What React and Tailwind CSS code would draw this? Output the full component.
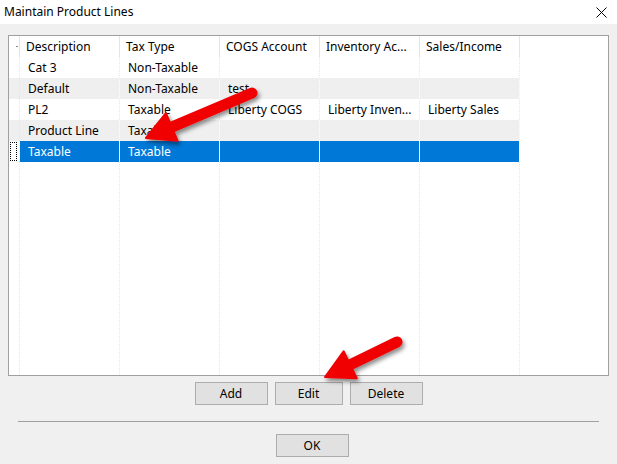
import React from "react";

const columns = ["Description", "Tax Type", "COGS Account", "Inventory Ac...", "Sales/Income"];

const productLines = [
  ["Cat 3", "Non-Taxable", "", "", ""],
  ["Default", "Non-Taxable", "test", "", ""],
  ["PL2", "Taxable", "Liberty COGS", "Liberty Inven...", "Liberty Sales"],
  ["Product Line", "Taxable", "", "", ""],
  ["Taxable", "Taxable", "", "", ""],
];

const SELECTED = 4;

// red callout arrow: shaft with round tail, triangular head
function Arrow({ from, to }) {
  const [x1, y1] = from;
  const [x2, y2] = to;
  const dx = x2 - x1;
  const dy = y2 - y1;
  const len = Math.hypot(dx, dy);
  const ux = dx / len;
  const uy = dy / len;
  const px = -uy;
  const py = ux;
  const headLen = 28;
  const headHalf = 15;
  const bx = x2 - ux * headLen;
  const by = y2 - uy * headLen;
  const head = [
    [x2, y2],
    [bx + px * headHalf, by + py * headHalf],
    [bx - px * headHalf, by - py * headHalf],
  ]
    .map((p) => p.join(","))
    .join(" ");
  return (
    <g filter="url(#arrowShadow)">
      <line x1={x1} y1={y1} x2={bx + ux * 2} y2={by + uy * 2} stroke="#f00000" strokeWidth="11" strokeLinecap="round" />
      <polygon points={head} fill="#f00000" strokeLinejoin="round" stroke="#f00000" strokeWidth="2" />
    </g>
  );
}

function Button({ children, className = "" }) {
  return (
    <button className={`h-[23px] border border-[#adadad] bg-[#e1e1e1] text-[12px] text-black ${className}`}>
      {children}
    </button>
  );
}

function GridRow({ cells, index }) {
  const selected = index === SELECTED;
  const striped = index % 2 === 1;
  const rowBg = selected ? "bg-[#0078d7] text-white" : striped ? "bg-[#efefef]" : "bg-white";
  const line = selected
    ? "border-r border-solid border-white"
    : striped
      ? "border-r border-dotted border-white"
      : "border-r border-dotted border-[#e6e6e6]";
  return (
    <div className="flex h-[21px]">
      <div className={`flex w-[11px] items-stretch py-[1px] pl-[1px] ${striped ? "bg-[#efefef]" : "bg-white"} border-r border-dotted border-[#e6e6e6]`}>
        {selected && <div className="w-[7px] border border-dotted border-black" />}
      </div>
      {cells.map((c, i) => (
        <div key={i} className={`flex w-[100px] items-center pl-[8px] ${rowBg} ${line}`}>
          <span className="whitespace-nowrap">{c}</span>
        </div>
      ))}
    </div>
  );
}

export default function App() {
  return (
    <div
      className="relative flex h-[464px] w-[617px] flex-col overflow-hidden bg-[#f0f0f0] text-[12px] text-black"
      style={{ fontFamily: '"Noto Sans", "DejaVu Sans", sans-serif' }}
    >
      {/* title bar */}
      <div className="flex h-[24px] items-center justify-between bg-white pl-[4px] pr-[10px]">
        <span className="text-[12px]">Maintain Product Lines</span>
        <svg width="11" height="11" viewBox="0 0 11 11">
          <path d="M0.5 0.5 L10.5 10.5 M10.5 0.5 L0.5 10.5" stroke="#000" strokeWidth="1" />
        </svg>
      </div>

      {/* product lines grid */}
      <div className="mx-[8px] mt-[11px] flex h-[341px] flex-col border border-[#a0a0a0] bg-white">
        <div className="flex h-[21px] bg-white">
          <div className="relative w-[11px] border-r border-solid border-[#e5e5e5]">
            <div className="absolute right-[1px] top-[10px] h-[1px] w-[2px] bg-[#888]" />
          </div>
          {columns.map((c) => (
            <div key={c} className="flex w-[100px] items-center border-r border-solid border-[#e5e5e5] pl-[6px]">
              <span className="whitespace-nowrap">{c}</span>
            </div>
          ))}
        </div>
        {productLines.map((r, i) => (
          <GridRow key={i} cells={r} index={i} />
        ))}
        <div className="flex flex-1">
          <div className="w-[11px] border-r border-dotted border-[#e6e6e6]" />
          {columns.map((c) => (
            <div key={c} className="w-[100px] border-r border-dotted border-[#e6e6e6]" />
          ))}
        </div>
      </div>

      {/* grid actions */}
      <div className="mt-[6px] flex justify-center gap-[7px]">
        <Button className="w-[73px]">Add</Button>
        <Button className="w-[68px]">Edit</Button>
        <Button className="w-[73px]">Delete</Button>
      </div>

      <div className="mx-[18px] mt-[16px] h-[1px] bg-[#a0a0a0]" />

      <div className="mt-[12px] flex justify-center pl-[7px]">
        <Button className="w-[73px]">OK</Button>
      </div>

      <svg className="pointer-events-none absolute left-0 top-0" width="617" height="464">
        <defs>
          <filter id="arrowShadow" x="-20%" y="-20%" width="150%" height="150%">
            <feDropShadow dx="2" dy="3" stdDeviation="2" floodColor="#000" floodOpacity="0.45" />
          </filter>
        </defs>
        <Arrow from={[252, 93]} to={[146, 138]} />
        <Arrow from={[397, 342]} to={[325, 377]} />
      </svg>
    </div>
  );
}
